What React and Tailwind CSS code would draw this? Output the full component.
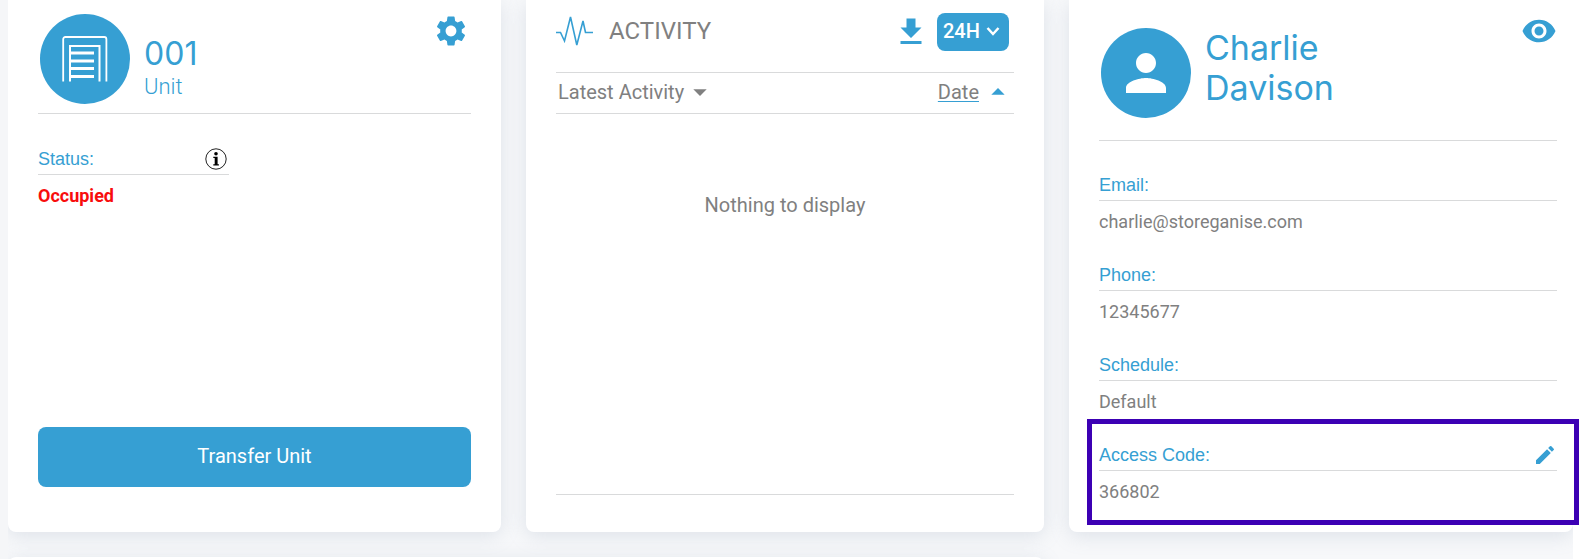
import { useState } from "react"
import { MdArrowDropDown, MdArrowDropUp, MdEdit, MdGetApp, MdPerson, MdSettings, MdVisibility } from "react-icons/md"

const contact = [
  { label: "Email:", value: "charlie@storeganise.com" },
  { label: "Phone:", value: "12345677" },
  { label: "Schedule:", value: "Default" },
]

const Card = ({ className = "", children }) => (
  <section
    className={`flex flex-col rounded-b-lg bg-white shadow-[0_4px_20px_rgba(120,140,165,0.2)] ${className}`}
  >
    {children}
  </section>
)

const UnitIcon = () => (
  <svg width="46" height="46" viewBox="0 0 46 46" fill="none" stroke="white" aria-hidden="true">
    <path d="M1.2 45.500V3.200a2.200 2.200 0 0 1 2.200-2.200H42.200a2.200 2.200 0 0 1 2.200 2.200V45.500" strokeWidth="1.800" />
    <path d="M8 45.500V10H37.500V45.500" strokeWidth="2" />
    <path d="M8 17H32M8 25H32M8 32.500H32M8 40.500H32" strokeWidth="3" />
  </svg>
)

const PulseIcon = () => (
  <svg width="37" height="30" viewBox="0 0 37 30" fill="none" stroke="#369fd3" strokeWidth="1.600" aria-hidden="true">
    <path d="M0 16.500H4.500L8.500 25L14.500 1L20.800 29L27 5L29.500 16.500H37" />
  </svg>
)

const InfoIcon = () => (
  <svg width="22" height="22" viewBox="0 0 22 22" aria-hidden="true">
    <circle cx="11" cy="11" r="10.200" fill="none" stroke="#222" strokeWidth="1" />
    <circle cx="11" cy="5.800" r="1.800" />
    <path d="M8.300 8.800H12.600V16.300H13.900V17.500H8.300V16.300H9.700V10H8.300Z" />
  </svg>
)

const UnitCard = () => (
  <Card className="px-[30px] pb-[45px]">
    <div className="flex h-[114px] items-start justify-between border-b border-[#d9dadb] pt-[13px] pr-[2px]">
      <div className="flex pt-px pl-[2px]">
        <div className="flex size-[90px] items-center justify-center rounded-full bg-[#369fd3]">
          <UnitIcon />
        </div>
        <div className="ml-[14px] pt-[20px]">
          <h2 className="font-[Inter,sans-serif] text-[32px] leading-[40px]">001</h2>
          <p className="text-[22px] leading-[26px] font-light">Unit</p>
        </div>
      </div>
      <button type="button" aria-label="Unit settings">
        <MdSettings size={36} />
      </button>
    </div>
    <div className="mt-[30px] w-[191px]">
      <div className="flex h-[31px] items-center justify-between border-b border-[#d9dadb] pr-[2px]">
        <h3 className="font-['Liberation_Sans',sans-serif] text-[18px]">Status:</h3>
        <button type="button" aria-label="Status info">
          <InfoIcon />
        </button>
      </div>
      <p className="pt-[9px] text-[18px] leading-[24px] font-bold text-[#f80d0d]">Occupied</p>
    </div>
    <button type="button" className="mt-auto h-[60px] rounded-lg bg-[#369fd3] pb-[2px] text-[20px] text-white">
      Transfer Unit
    </button>
  </Card>
)

const ActivityCard = () => {
  const [ascending, setAscending] = useState(true)

  return (
    <Card className="px-[30px] pb-[37px] text-[20px] text-[#808080]">
      <div className="flex h-[73px] items-start justify-between border-b border-[#d9dadb] pt-[13px]">
        <div className="flex items-center pt-[3px]">
          <PulseIcon />
          <h2 className="ml-[16px] text-[24px] leading-[30px]">ACTIVITY</h2>
        </div>
        <div className="flex pr-[5px]">
          <button type="button" aria-label="Download" className="text-[#369fd3]">
            <MdGetApp size={36} />
          </button>
          <button
            type="button"
            className="ml-[8px] flex h-[38px] w-[72px] items-center rounded-lg bg-[#369fd3] pb-[2px] pl-[6px] font-medium text-white"
          >
            24H
            <svg width="14" height="10" viewBox="0 0 14 10" className="ml-[6px]" fill="none" stroke="white" strokeWidth="2.500" aria-hidden="true">
              <path d="M1.500 2L7 8L12.500 2" />
            </svg>
          </button>
        </div>
      </div>
      <div className="flex h-[41px] items-center justify-between border-b border-[#d9dadb] pb-[2px] pl-[2px]">
        <button type="button" className="flex items-center">
          Latest Activity
          <MdArrowDropDown size={32} />
        </button>
        <button type="button" className="flex items-center" onClick={() => setAscending(!ascending)}>
          <span className="underline decoration-[#369fd3] decoration-1 underline-offset-2">Date</span>
          {ascending ? (
            <MdArrowDropUp size={32} className="ml-[3px] text-[#369fd3]" />
          ) : (
            <MdArrowDropDown size={32} className="ml-[3px] text-[#369fd3]" />
          )}
        </button>
      </div>
      <div className="flex-1 border-b border-[#d9dadb] pt-[78px] text-center leading-[26px]">
        Nothing to display
      </div>
    </Card>
  )
}

const Field = ({ label, value, action }) => (
  <div className="h-[90px]">
    <div className="flex h-[31px] items-center justify-between border-b border-[#d9dadb]">
      <h3 className="font-['Liberation_Sans',sans-serif] text-[18px]">{label}</h3>
      {action}
    </div>
    <p className="pt-[9px] text-[18px] leading-[24px] text-[#808080]">{value}</p>
  </div>
)

const RenterCard = () => (
  <Card className="pr-[16px] pl-[30px]">
    <div className="flex h-[141px] items-start justify-between border-b border-[#d9dadb] pt-[13px]">
      <div className="flex pt-[15px] pl-[2px]">
        <div className="flex size-[90px] items-center justify-center rounded-full bg-[#369fd3] text-white">
          <MdPerson size={60} />
        </div>
        <h2 className="ml-[14px] w-[150px] font-[Inter,sans-serif] text-[34px] leading-[40px]">Charlie Davison</h2>
      </div>
      <button type="button" aria-label="View renter">
        <MdVisibility size={36} />
      </button>
    </div>
    <div className="mt-[29px]">
      {contact.map((field) => (
        <Field key={field.label} label={field.label} value={field.value} />
      ))}
      <div className="relative">
        <Field
          label="Access Code:"
          value="366802"
          action={
            <button type="button" aria-label="Edit access code">
              <MdEdit size={24} />
            </button>
          }
        />
        <div className="pointer-events-none absolute -top-[21px] -right-[22px] -left-[12px] z-20 h-[106px] border-[5px] border-[#3c00b4]" />
      </div>
    </div>
  </Card>
)

const App = () => {
  return (
    <div className="flex h-screen overflow-hidden bg-white font-[Roboto,sans-serif] text-[#369fd3]">
      <div className="relative z-10 w-[8px] bg-[#f5f6f8]" />
      <main className="flex-1 bg-[#f7f8fa]">
        <div className="grid min-h-[532px] grid-cols-[493fr_518fr_504fr] gap-[25px]">
          <UnitCard />
          <ActivityCard />
          <RenterCard />
        </div>
        <div className="mt-[25px] grid grid-cols-[1036fr_504fr] gap-[25px]">
          <Card className="h-[200px] rounded-t-lg" />
        </div>
      </main>
      <div className="relative z-10 w-[6px] bg-white" />
    </div>
  )
}

export default App
